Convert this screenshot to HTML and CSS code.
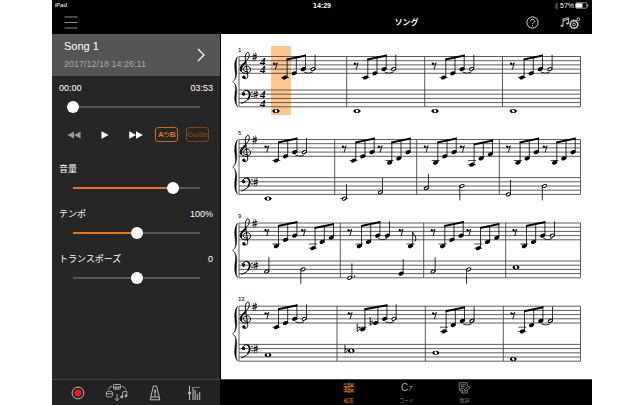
FILE: index.html
```html
<!DOCTYPE html>
<html lang="ja">
<head>
    <meta charset="UTF-8">
    <meta name="viewport" content="width=device-width, initial-scale=1.0">
    <title>ソング</title>
    <link rel="stylesheet" href="styles.css">
</head>
<body>
    <div class="app">
        <header class="status">
            <span class="device">iPad</span>
            <span class="clock">14:29</span>
            <span class="battery">
                <svg width="5" height="8" viewBox="0 0 5 8"><path d="M.5 2.2l3.6 3.4L2.4 7.2V.8l1.7 1.6L.5 5.8" fill="none" stroke="#777" stroke-width=".7"/></svg>
                57%
                <svg width="14" height="7" viewBox="0 0 14 7"><rect x=".5" y=".8" width="11.4" height="5.4" rx="1" fill="none" stroke="#ccc" stroke-width=".7"/><rect x="1" y="1.3" width="6.5" height="4.4" fill="#fff"/><path d="M12.8 2.5v2" stroke="#ccc"/></svg>
            </span>
        </header>

        <div class="columns">
            <aside class="sidebar">
                <div class="menu-bar">
                    <button class="icon-button" aria-label="メニュー">
                        <svg width="14" height="13" viewBox="0 0 14 13"><path d="M.5 1h13M.5 6.5h13M.5 12h13" stroke="#8c8c8c" stroke-width="1.1"/></svg>
                    </button>
                </div>
                <button class="song">
                    <span class="song-text">
                        <span class="song-name">Song 1</span>
                        <span class="song-date">2017/12/18 14:26:11</span>
                    </span>
                    <svg width="8" height="14" viewBox="0 0 8 14"><path d="M1 1l6 6-6 6" fill="none" stroke="#fff" stroke-width="1.2"/></svg>
                </button>

                <div class="controls">
                    <div class="control">
                        <label class="row" for="position"><span>00:00</span><span>03:53</span></label>
                        <input type="range" id="position" min="0" max="233" value="0" style="--fill: 0">
                    </div>
                    <div class="transport">
                        <button class="icon-button" aria-label="巻き戻し">
                            <svg width="14" height="8" viewBox="0 0 14 8"><path d="M7 .6v6.8L.4 4zM13.6.6v6.8L7 4z" fill="#999"/></svg>
                        </button>
                        <button class="icon-button" aria-label="再生">
                            <svg width="8" height="8" viewBox="0 0 8 8"><path d="M.5.3v7.4L7.6 4z" fill="#fff"/></svg>
                        </button>
                        <button class="icon-button" aria-label="早送り">
                            <svg width="14" height="8" viewBox="0 0 14 8"><path d="M.2.3v7.4L7 4zM7 .3v7.4L13.9 4z" fill="#fff"/></svg>
                        </button>
                        <button class="toggle repeat" aria-label="ABリピート">A<svg width="6" height="7" viewBox="0 0 6 7"><path d="M.8 1v2h2M1 2.8A2.1 2.1 0 1 1 1.6 5.4" fill="none" stroke="#e07a1c" stroke-width=".8"/></svg>B</button>
                        <button class="toggle guide">Guide</button>
                    </div>
                    <div class="control">
                        <label class="row" for="volume"><span>音量</span></label>
                        <input type="range" id="volume" min="0" max="127" value="100" style="--fill: .787">
                    </div>
                    <div class="control">
                        <label class="row" for="tempo"><span>テンポ</span><span>100%</span></label>
                        <input type="range" id="tempo" min="0" max="200" value="100" style="--fill: .5">
                    </div>
                    <div class="control">
                        <label class="row" for="transpose"><span>トランスポーズ</span><span>0</span></label>
                        <input type="range" id="transpose" min="-12" max="12" value="0" style="--fill: 0">
                    </div>
                </div>

                <nav class="tools">
                    <button class="icon-button" aria-label="録音">
                        <svg width="14" height="14" viewBox="0 0 14 14"><circle cx="7" cy="7" r="5.9" fill="none" stroke="#bbb"/><circle cx="7" cy="7" r="3.6" fill="#f5141e"/></svg>
                    </button>
                    <button class="icon-button" aria-label="音色">
                        <svg width="24" height="20" viewBox="0 0 24 20" fill="none" stroke="#bbb" stroke-width=".9">
                            <rect x="8.5" y="1.5" width="7" height="4.6" rx=".8"/><path d="M8.5 4h7M10.8 4v2M13.2 4v2"/>
                            <path d="M7 3.2Q4.2 4 3.2 6.4M17 3.2Q19.6 4 20.8 6.4"/>
                            <ellipse cx="4.4" cy="9.5" rx="3" ry="1.4"/><path d="M1.4 9.5v3.2c0 1.8 6 1.8 6 0V9.5"/>
                            <path d="M17.6 14V9l4.2-1v5"/><circle cx="16.7" cy="14" r="1" fill="#bbb"/><circle cx="20.9" cy="13" r="1" fill="#bbb"/>
                            <path d="M12 11v6.6M9.8 15.4l2.2 2.3 2.2-2.3"/>
                        </svg>
                    </button>
                    <button class="icon-button" aria-label="メトロノーム">
                        <svg width="12" height="16" viewBox="0 0 12 16" fill="none" stroke="#bbb"><path d="M4.4 1h3.2l3.2 13.8H1.2z"/><path d="M1.8 12h8.4M6 11.5V4"/><path d="M5.3 5.5h1.4v2H5.3z" fill="#bbb" stroke="none"/></svg>
                    </button>
                    <button class="icon-button" aria-label="ミキサー">
                        <svg width="14" height="16" viewBox="0 0 14 16" fill="none" stroke="#bbb"><path d="M2.5 1v14"/><circle cx="2.5" cy="8" r="1.6" fill="#bbb" stroke="none"/><path d="M5 2.5h8" stroke="#777"/><path d="M6 3v12M8.2 5v10M10.4 9v6M12.6 7v8" stroke-width="1.4" stroke="#999"/></svg>
                    </button>
                </nav>
            </aside>

            <main class="main">
                <div class="title-bar">
                    <h1>ソング</h1>
                    <div class="title-actions">
                        <button class="icon-button" aria-label="ヘルプ">
                            <svg width="13" height="13" viewBox="0 0 13 13" fill="none" stroke="#ddd"><circle cx="6.5" cy="6.5" r="5.6"/><path d="M4.6 5.2c0-2.6 3.9-2.5 3.9-.2 0 1.4-2 1.4-2 3"/><path d="M6.5 9v1"/></svg>
                        </button>
                        <button class="icon-button" aria-label="ソング設定">
                            <svg width="21" height="14" viewBox="0 0 21 14" fill="none" stroke="#ccc">
                                <path d="M3 9.5V3l5.4-1.4v5.6M3 4.6l5.4-1.4"/><ellipse cx="1.9" cy="9.8" rx="1.4" ry="1.1" fill="#ccc" stroke="none"/><ellipse cx="7.4" cy="7.6" rx="1.3" ry="1" fill="#ccc" stroke="none"/>
                                <circle cx="14" cy="8.4" r="3.6" stroke-width="1.4"/><circle cx="14" cy="8.4" r="1.4"/><circle cx="14" cy="8.4" r="4.7" stroke-width=".8" stroke-dasharray="1.6 1.3"/>
                                <circle cx="18.4" cy="3.2" r="1.4"/>
                            </svg>
                        </button>
                    </div>
                </div>
                <svg class="score" id="score" viewBox="221 34 371 345" role="img" aria-label="譜面"></svg>
                <nav class="tabs">
                    <button class="tab active">
                        <svg width="12" height="12" viewBox="0 0 12 12" stroke="#d66f16"><path d="M.5 2h11M.5 4.6h11M.5 7.2h11M.5 9.8h11" stroke-width=".9"/><path d="M6 1v10"/><path d="M2 5.8h2.4M7.6 3.4h2.4M7.6 8.6h2.4M2 9h2" stroke-width="1.4"/></svg>
                        <span>譜面</span>
                    </button>
                    <button class="tab">
                        <span class="chord">C<i>7</i></span>
                        <span>コード</span>
                    </button>
                    <button class="tab">
                        <svg width="13" height="12" viewBox="0 0 13 12" fill="none" stroke="#888" stroke-width=".9"><path d="M4.5 11L1.2 8V.8h8v3M9.2 8v3H4.5V8H1.2"/><path d="M2.8 2.8h5M2.8 4.6h4M2.8 6.3h3"/><path d="M6.2 9.2l.5-2 3.8-3 1.6 1.6-4 3z"/></svg>
                        <span>歌詞</span>
                    </button>
                </nav>
            </main>
        </div>
    </div>
    <script src="score.js"></script>
</body>
</html>
```

FILE: styles.css
```css
* {
    box-sizing: border-box;
}
body {
    margin: 0;
    background: #fff;
    color: #fff;
    font-family: "Liberation Sans", "Noto Sans CJK JP", sans-serif;
    font-size: 9px;
}
button {
    margin: 0;
    padding: 0;
    border: none;
    background: none;
    color: inherit;
    font: inherit;
    cursor: pointer;
}
svg {
    display: block;
}
.app {
    display: flex;
    flex-direction: column;
    min-height: 100vh;
    margin: 0 52px;
    background: #000;
}
.status {
    display: grid;
    grid-template-columns: 1fr auto 1fr;
    align-items: center;
    height: 11px;
    padding: 0 3px;
    font-size: 7px;
    line-height: 11px;
}
.device {
    font-size: 6px;
}
.clock {
    font-weight: bold;
}
.battery {
    display: flex;
    align-items: center;
    justify-content: flex-end;
    gap: 1px;
}
.columns {
    flex: 1;
    display: grid;
    grid-template-columns: 169px 1fr;
}
.icon-button {
    display: flex;
    align-items: center;
    justify-content: center;
}

/* left column */
.sidebar {
    display: flex;
    flex-direction: column;
    border-right: 1px solid #000;
    background: #262626;
}
.menu-bar {
    display: flex;
    align-items: center;
    height: 23px;
    padding: 0 12px;
    background: #000;
}
.song {
    display: flex;
    align-items: center;
    justify-content: space-between;
    height: 42px;
    padding: 0 15px 0 12px;
    background: #555;
    text-align: left;
}
.song-text {
    display: flex;
    flex-direction: column;
    gap: 6px;
}
.song-name {
    font-size: 11px;
    line-height: 13px;
}
.song-date {
    line-height: 11px;
    color: #aaa;
}
.controls {
    flex: 1;
    display: flex;
    flex-direction: column;
    gap: 13px;
    padding: 5px 7px 0;
}
.row {
    display: flex;
    justify-content: space-between;
    height: 15px;
    line-height: 15px;
}
input[type="range"] {
    -webkit-appearance: none;
    appearance: none;
    display: block;
    width: calc(100% - 15px);
    height: 12px;
    margin: 5px 8px 0;
    background-image: linear-gradient(#ed7408, #ed7408), linear-gradient(#555, #555);
    background-repeat: no-repeat;
    background-position: 6px 5px;
    background-size: calc((100% - 12px) * var(--fill)) 2px, calc(100% - 12px) 2px;
    background-color: transparent;
}
input[type="range"]::-webkit-slider-thumb {
    -webkit-appearance: none;
    width: 12px;
    height: 12px;
    border-radius: 50%;
    background: #fff;
}
.transport {
    display: grid;
    grid-template-columns: repeat(5, 1fr);
    align-items: center;
    justify-items: center;
    height: 17px;
    margin-bottom: 6px;
}
.toggle {
    display: flex;
    align-items: center;
    justify-content: center;
    width: 23px;
    height: 15px;
    border: 1px solid #c96b17;
    border-radius: 3px;
    color: #e07a1c;
    font-size: 8px;
}
.repeat {
    font-weight: bold;
}
.guide {
    border-color: #7c4616;
    color: #8a4d17;
}
.tools {
    display: grid;
    grid-template-columns: repeat(4, 1fr);
    height: 26px;
    padding: 0 7px;
    border-top: 1px solid #444;
    background: #222;
}

/* right column */
.main {
    display: flex;
    flex-direction: column;
    background: #fff;
}
.title-bar {
    display: grid;
    grid-template-columns: 1fr auto 1fr;
    align-items: center;
    height: 23px;
    padding: 0 11px;
    background: #000;
}
h1 {
    grid-column: 2;
    margin: 0;
    font-size: 8px;
    line-height: 12px;
}
.title-actions {
    display: flex;
    justify-content: flex-end;
    gap: 21px;
}
.score {
    flex: 1;
    width: 100%;
}
.score .staff {
    stroke: #333;
    stroke-width: .8;
}
.score .line {
    fill: none;
    stroke: #000;
    stroke-linecap: round;
}
.score .cursor {
    fill: #ffc58d;
}
.score .number {
    font-size: 6px;
}
.score .meter {
    font: italic bold 11px "Liberation Serif", serif;
}
.tabs {
    display: flex;
    justify-content: center;
    height: 26px;
    border-top: 1px solid #444;
    background: #000;
}
.tab {
    display: flex;
    flex-direction: column;
    align-items: center;
    width: 58px;
    padding-top: 2px;
    color: #888;
    font-size: 5px;
    line-height: 8px;
}
.tab svg, .chord {
    height: 12px;
    margin-bottom: 2px;
}
.chord {
    font-size: 10px;
    line-height: 12px;
    color: #aaa;
}
.chord i {
    font-size: 7px;
}
.active {
    color: #d66f16;
}
```

FILE: score.js
```js
// Notes are given in half staff spaces below the top line.
const HALF = 2.1;
const LEFT = 239;
const RIGHT = 580.5;

// treble: [x of the rest, beamed notes, held note type]
// bass: [x, step, type]
const systems = [
    {
        number: 1, treble: 56.5, bass: 90, meter: true, bars: [346.7, 424.7, 502.5],
        groups: [[275.3, [10, 8, 6], 'half'], [356, [10, 8, 6], 'half'], [434, [10, 8, 6], 'half'], [512.3, [10, 8, 6], 'half']],
        low: [[276, 10, 'whole'], [357, 10, 'whole'], [435, 10, 'whole'], [513.3, 10, 'whole']]
    },
    {
        number: 5, treble: 139.5, bass: 177.6, bars: [334.7, 416.7, 499.3],
        groups: [[266.7, [10, 8, 6], 'half'], [344, [10, 8, 6]], [380, [11, 9, 6]], [426, [11, 8, 6]], [462.3, [12, 9, 7]], [508.3, [11, 9, 6]], [545, [11, 9, 6]]],
        low: [[268, 10, 'whole'], [344.3, 10, 'half'], [380.3, 7, 'half'], [426.3, 5, 'half'], [462, 4, 'half', true], [508.3, 8, 'half'], [544.5, 4, 'half', true]]
    },
    {
        number: 9, treble: 223, bass: 261, bars: [340.3, 423.7, 505.7],
        groups: [[266.7, [11, 8, 6]], [303.3, [12, 9, 7]], [349.7, [11, 9, 6], 'quarter'], [401, [11]], [433, [11, 8, 6]], [468.7, [12, 9, 7]], [514.7, [11, 9, 6], 'half']],
        low: [[266.7, 5, 'half'], [303, 4, 'half', true], [349.7, 8, 'dotted'], [401, 6, 'quarter'], [433, 5, 'half'], [468.7, 4, 'half', true], [516, 3, 'whole']]
    },
    {
        number: 13, treble: 306.2, bass: 344.4, bars: [337, 425.3, 503.3],
        groups: [[266.7, [10, 8, 6], 'half'], [350, [11, 8, 6], 'half', true], [434.3, [12, 9, 7], 'half'], [512.7, [12, 9, 7], 'half']],
        low: [[268, 5, 'whole'], [351.3, 3, 'whole', false, true], [435.7, 4, 'whole'], [513.3, 7, 'whole']]
    }
];

function line(d, width) {
    return `<path class="line" stroke-width="${width || .8}" d="${d}"/>`;
}

function sharp(x, y) {
    return line(`M${x - .9} ${y - 3.6}v7.6M${x + 1} ${y - 4}v7.6`, .6) +
        line(`M${x - 2} ${y - .8}l4-1M${x - 2} ${y + 1.8}l4-1`, 1);
}

function flat(x, y) {
    return line(`M${x} ${y - 5.5}v7.6c5-3 2.4-5.6 0-3`, .9);
}

function ledgers(x, y, step) {
    let out = '';
    for (let s = 10; s <= step; s += 2) {
        out += line(`M${x - 3.6} ${y + s * HALF}h7.2`, .7);
    }
    return out;
}

function head(x, y, type) {
    if (type === 'whole') {
        return `<ellipse cx="${x}" cy="${y}" rx="3.3" ry="2"/><ellipse cx="${x}" cy="${y}" rx="1.2" ry="1.6" fill="#fff" transform="rotate(-25 ${x} ${y})"/>`;
    }
    let out = `<ellipse cx="${x}" cy="${y}" rx="2.7" ry="1.9" transform="rotate(-20 ${x} ${y})"/>`;
    if (type === 'half' || type === 'dotted') {
        out += `<ellipse cx="${x}" cy="${y}" rx="1.9" ry=".8" fill="#fff" transform="rotate(-32 ${x} ${y})"/>`;
    }
    if (type === 'dotted') {
        out += `<circle cx="${x + 5}" cy="${y - 1.5}" r=".8"/>`;
    }
    return out;
}

function note(x, top, step, type, down) {
    const y = top + step * HALF;
    let out = ledgers(x, top, step) + head(x, y, type);
    if (type !== 'whole') {
        out += down ? line(`M${x - 2.2} ${y}v14`) : line(`M${x + 2.2} ${y}v-14`);
    }
    return out;
}

function group(top, [x, steps, tail, flats]) {
    const r = top + 9;
    let out = `<circle cx="${x - 1.2}" cy="${r - 1.8}" r="1.1"/>` + line(`M${x - 1.2} ${r - 1}q2 .4 3.2-1.8l-1.8 6.4`, .9);
    if (steps.length === 1) {
        out += note(x + 9.5, top, steps[0], 'quarter');
        return out + line(`M${x + 11.7} ${top + 9.5}c.4 3 5 3.6 2.4 8.6`, 1);
    }
    const xs = flats ? [12.7, 25.7, 34.7, 44] : [9.6, 18.8, 28, 37.6];
    const shift = (steps[2] - 6) * HALF;
    const start = top + 2.4 + shift;
    const end = top - 1.6 + shift;
    steps.forEach((step, i) => {
        const nx = x + xs[i];
        const y = top + step * HALF;
        const beam = start + (end - start) * (xs[i] - xs[0]) / (xs[2] - xs[0]);
        out += ledgers(nx, top, step) + head(nx, y) + line(`M${nx + 2.2} ${y}V${beam}`);
        if (flats && i < 2) {
            out += flat(nx - 5.5, y);
        }
    });
    out += `<path d="M${x + xs[0] + 1.8} ${start - .4}L${x + xs[2] + 2.6} ${end - .4}v2L${x + xs[0] + 1.8} ${start + 1.6}z"/>`;
    if (tail) {
        const y = top + steps[2] * HALF;
        out += note(x + xs[3], top, steps[2], tail);
        out += line(`M${x + xs[2] + 1} ${y + 3.2}q4 2 8 0`, .8);
    }
    return out;
}

function trebleClef(x, y) {
    return `<g transform="translate(${x} ${y})">` +
        line('M1.2 15C-1.8 15.2-2.8 13.4-2 11.8C-1 9 4.6 8.8 5 12.8C5.4 17-.8 18-3.8 15.4C-7 12.4-4.4 8.6-.8 5.6C2.4 3 4.2.6 3.8-2C3.5-4.4 2.2-5 1.1-3.4C-.6-1-.4 1.6.2 5L2.2 18.4C2.6 21.6.6 22.8-1.2 22', 1) +
        line('M-4.2 14.4C-5.2 11.6-2.8 8.4.4 5.6', 1.5) +
        '<circle cx="-1.6" cy="20.8" r="1.7"/></g>';
}

function bassClef(x, y) {
    return `<g transform="translate(${x} ${y})">` +
        line('M-3.6 3.6C-3-.6 3.6-1 4 4.2C4.2 8.6.6 11.4-4.4 13.4', 1) +
        line('M1.8.8C4.4 2.6 4 6.4 2 9', 1.5) +
        '<circle cx="-2.4" cy="4" r="1.7"/><circle cx="6" cy="2.2" r=".8"/><circle cx="6" cy="6.4" r=".8"/></g>';
}

function brace(top, bottom) {
    const mid = (top + bottom) / 2;
    const x = 237.5;
    return `<path d="M${x} ${top}C${x - 7} ${top + 9} ${x + 2} ${mid - 5} ${x - 4.6} ${mid}C${x + 2} ${mid + 5} ${x - 7} ${bottom - 9} ${x} ${bottom}C${x - 3.6} ${bottom - 9} ${x + 3} ${mid + 6} ${x - 4.6} ${mid}C${x + 3} ${mid - 6} ${x - 3.6} ${top + 9} ${x} ${top}z" stroke="#000" stroke-width=".4"/>`;
}

function drawSystem(s) {
    const bottom = s.bass + HALF * 8;
    let out = `<text class="number" x="238" y="${s.treble - 5}">${s.number}</text>`;
    for (let i = 0; i < 5; i++) {
        out += `<path class="staff" d="M${LEFT} ${s.treble + i * HALF * 2}H${RIGHT}M${LEFT} ${s.bass + i * HALF * 2}H${RIGHT}"/>`;
    }
    [LEFT, ...s.bars, RIGHT].forEach(x => {
        out += `<path class="staff" d="M${x} ${s.treble}V${bottom}"/>`;
    });
    out += brace(s.treble, bottom);
    out += trebleClef(245.5, s.treble) + sharp(254.7, s.treble + .4);
    out += bassClef(246, s.bass) + sharp(255.7, s.bass + 4.4);
    if (s.meter) {
        [s.treble, s.bass].forEach(y => {
            out += `<text class="meter" x="260" y="${y + 8}">4</text><text class="meter" x="260" y="${y + 16.5}">4</text>`;
        });
    }
    s.groups.forEach(g => out += group(s.treble, g));
    s.low.forEach(([x, step, type, down, isFlat]) => {
        out += note(x, s.bass, step, type, down);
        if (isFlat) {
            out += flat(x - 6.3, s.bass + step * HALF);
        }
    });
    return out;
}

document.getElementById('score').innerHTML =
    '<rect class="cursor" x="271" y="46" width="20" height="69"/>' + systems.map(drawSystem).join('');
```
